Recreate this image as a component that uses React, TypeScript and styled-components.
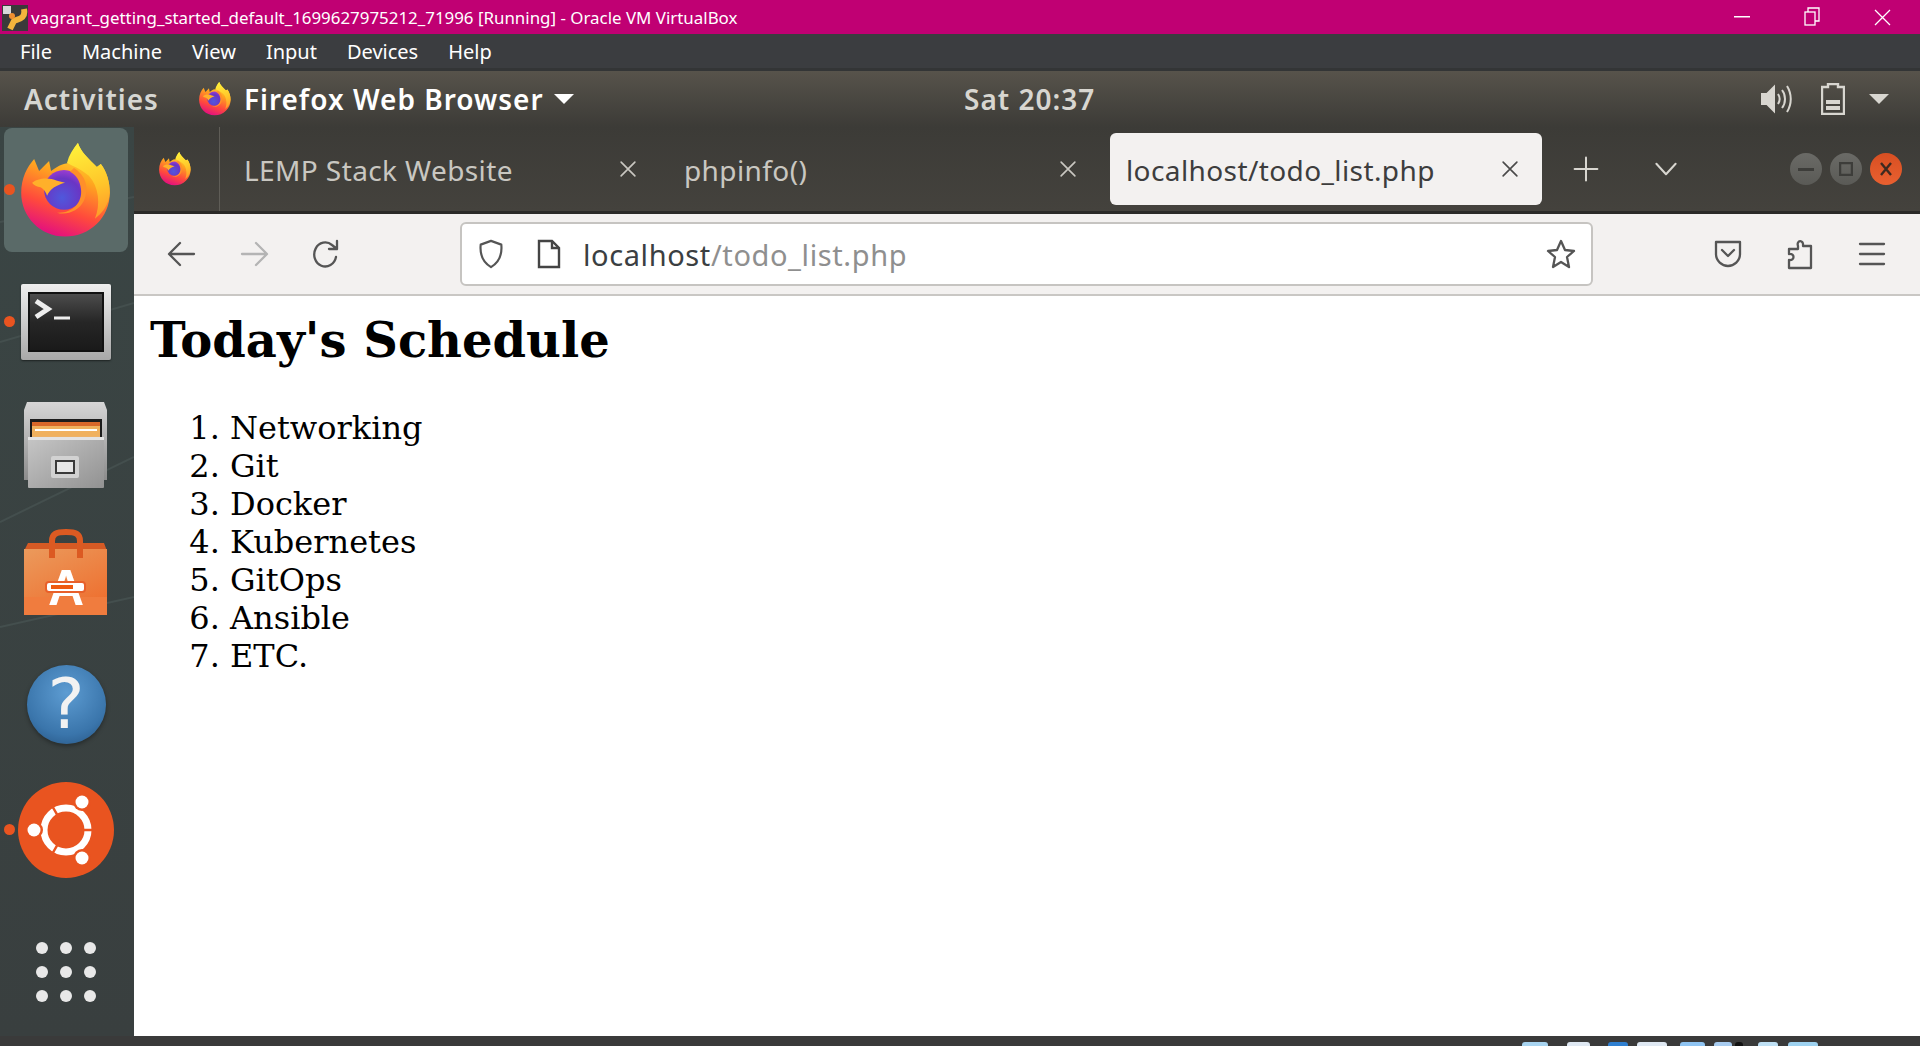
import type { ReactNode } from 'react';
import styled, { createGlobalStyle } from 'styled-components';

const GlobalStyle = createGlobalStyle`
  html, body {
    margin: 0;
    padding: 0;
    background: #3a4544;
  }
  * {
    box-sizing: border-box;
  }
`;

const UI_FONT = `'Noto Sans', 'Open Sans', sans-serif`;

const Screen = styled.div`
  width: 1920px;
  height: 1046px;
  display: flex;
  flex-direction: column;
  overflow: hidden;
`;

const TitleBar = styled.div`
  height: 34px;
  flex: none;
  display: flex;
  align-items: center;
  padding-right: 3px;
  background: #c00073;
  color: #fff;
  font: 16.9px ${UI_FONT};
`;

const TitleIcon = styled.svg`
  width: 26px;
  height: 26px;
  margin: 2px 3px 0 2px;
`;

const TitleText = styled.span`
  flex: 1;
  white-space: nowrap;
`;

const WindowButton = styled.div`
  width: 70px;
  height: 34px;
  display: flex;
  align-items: center;
  justify-content: center;
`;

const MenuBar = styled.div`
  height: 37px;
  flex: none;
  display: flex;
  align-items: center;
  gap: 30px;
  padding-left: 20px;
  background: #3b3d40;
  border-bottom: 3px solid #333536;
  color: #fff;
  font: 20px ${UI_FONT};
`;

const TopBar = styled.div`
  height: 56px;
  flex: none;
  display: flex;
  align-items: center;
  position: relative;
  padding-left: 24px;
  background: linear-gradient(#57534b, #3c3b37);
  color: #fff;
  font: 600 28px ${UI_FONT};
  letter-spacing: 1px;
`;

const Activities = styled.span`
  color: #d6d6d2;
  margin-right: 40px;
`;

const AppName = styled.span`
  margin: 0 10px 0 13px;
`;

const Clock = styled.span`
  position: absolute;
  left: 964px;
  color: #d8d6d0;
`;

const Tray = styled.div`
  margin-left: auto;
  display: flex;
  align-items: center;
  gap: 26px;
  padding-right: 31px;
`;

const BatteryIcon = styled.svg`
  width: 24px;
  height: 32px;
  margin: 0 -2px 0 2px;
`;

const DownArrow = styled.div<{ $color: string }>`
  width: 0;
  height: 0;
  border-left: 10px solid transparent;
  border-right: 10px solid transparent;
  border-top: 10px solid ${({ $color }) => $color};
`;

const Main = styled.div`
  flex: 1;
  min-height: 0;
  display: flex;
`;

const Dock = styled.div`
  width: 134px;
  flex: none;
  position: relative;
  display: flex;
  flex-direction: column;
  align-items: center;
  padding: 1px 2px 0 0;
  background: linear-gradient(#3a4544, #393f3f);
`;

const Wallpaper = styled.svg`
  position: absolute;
  inset: 0;
  width: 100%;
  height: 100%;
`;

const DockItem = styled.div<{ $height: number; $active?: boolean; $top?: number }>`
  width: 124px;
  height: ${({ $height }) => $height}px;
  margin-top: ${({ $top }) => $top ?? 0}px;
  flex: none;
  position: relative;
  display: flex;
  align-items: center;
  justify-content: center;
  border-radius: 8px;
  background: ${({ $active }) => ($active ? '#5a6a68' : 'transparent')};
`;

const RunDot = styled.div`
  position: absolute;
  left: 0;
  top: 50%;
  width: 11px;
  height: 11px;
  margin-top: -6px;
  border-radius: 50%;
  background: #e95420;
`;

const TerminalIcon = styled.div`
  width: 90px;
  height: 76px;
  padding: 8px 7px;
  border-radius: 2px;
  background: linear-gradient(#eeeeee, #a8a8a8);
  box-shadow: 0 1px 2px rgba(0, 0, 0, 0.5);
`;

const TerminalScreen = styled.div`
  height: 100%;
  background: linear-gradient(#4c4c4c, #262626 50%, #1a1a1a);
  border: 2px solid #111;
`;

const HelpIcon = styled.div`
  width: 79px;
  height: 79px;
  display: flex;
  align-items: center;
  justify-content: center;
  border-radius: 50%;
  background: radial-gradient(circle at 50% 35%, #5d9cd2, #3a75ab 65%, #234f7c);
  box-shadow: 0 2px 4px rgba(0, 0, 0, 0.35);
  color: #f2f2f2;
  font: 400 70px 'DejaVu Sans', sans-serif;
`;

const AppsGrid = styled.div`
  display: grid;
  grid-template-columns: repeat(3, 12px);
  gap: 12px;
`;

const AppsDot = styled.div`
  width: 12px;
  height: 12px;
  border-radius: 50%;
  background: #e8e8e8;
`;

const Browser = styled.div`
  flex: 1;
  min-width: 0;
  display: flex;
  flex-direction: column;
  background: #fff;
`;

const TabBar = styled.div`
  height: 87px;
  flex: none;
  display: flex;
  align-items: center;
  background: linear-gradient(#3c3b37, #44423d);
  border-bottom: 3px solid #2b2a28;
  font: 28px ${UI_FONT};
`;

const FirefoxSlot = styled.div`
  width: 86px;
  height: 100%;
  flex: none;
  display: flex;
  align-items: center;
  justify-content: center;
  padding-right: 4px;
  border-right: 1px solid #5f5d57;
`;

const Tab = styled.div<{ $active?: boolean }>`
  width: ${({ $active }) => ($active ? 432 : 440)}px;
  height: 72px;
  margin-left: ${({ $active }) => ($active ? 10 : 0)}px;
  flex: none;
  display: flex;
  align-items: center;
  justify-content: space-between;
  padding: 0 22px 0 ${({ $active }) => ($active ? 16 : 24)}px;
  border-radius: 6px;
  background: ${({ $active }) => ($active ? '#f3f1f0' : 'transparent')};
  color: ${({ $active }) => ($active ? '#3d3d3d' : '#c9c7c1')};
`;

const TabTitle = styled.span`
  padding-top: 2px;
  white-space: nowrap;
  letter-spacing: 0.4px;
`;

const TabTools = styled.div`
  display: flex;
  align-items: center;
  gap: 52px;
  padding-left: 30px;
`;

const WindowControls = styled.div`
  margin-left: auto;
  display: flex;
  gap: 8px;
  padding: 0 18px 0 0;
`;

const ControlDot = styled.div<{ $bg: string }>`
  width: 32px;
  height: 32px;
  display: flex;
  align-items: center;
  justify-content: center;
  border-radius: 50%;
  background: ${({ $bg }) => $bg};
`;

const Toolbar = styled.div`
  height: 82px;
  flex: none;
  display: flex;
  align-items: center;
  padding-left: 12px;
  background: #f3f1f0;
  border-bottom: 2px solid #c9c7c4;
`;

const ToolButton = styled.div`
  width: 72px;
  display: flex;
  justify-content: center;
`;

const UrlBar = styled.div`
  width: 1133px;
  height: 64px;
  margin: 0 99px 0 98px;
  flex: none;
  display: flex;
  align-items: center;
  padding: 0 14px;
  background: #fff;
  border: 2px solid #c6c4c1;
  border-radius: 6px;
  font: 29px ${UI_FONT};
`;

const PageIcon = styled.svg`
  width: 26px;
  height: 30px;
  margin-left: 30px;
`;

const UrlHost = styled.span`
  color: #3b3f42;
  margin-left: 21px;
  letter-spacing: 0.6px;
`;

const UrlPath = styled.span`
  flex: 1;
  color: #8f8f8f;
  letter-spacing: 0.6px;
`;

const Page = styled.div`
  flex: 1;
  padding: 1px 16px;
  font-family: 'DejaVu Serif', serif;
  color: #000;
`;

const Heading = styled.h1`
  margin: 16px 0 42px;
  font-size: 48px;
  line-height: 54px;
  font-weight: 700;
`;

const ScheduleList = styled.ol`
  margin: 0;
  padding-left: 80px;
  font-size: 32px;
  line-height: 38px;
`;

const TaskStrip = styled.div`
  height: 10px;
  flex: none;
  display: flex;
  align-items: flex-end;
  padding-left: 1522px;
  background: #3a3a3a;
`;

const TaskChip = styled.div<{ $width: number; $gap: number; $color: string }>`
  width: ${({ $width }) => $width}px;
  height: 4px;
  margin-right: ${({ $gap }) => $gap}px;
  border-radius: 3px 3px 0 0;
  background: ${({ $color }) => $color};
`;

const FirefoxLogo = ({ size, uid }: { size: number; uid: string }) => (
  <svg width={size} height={size * 1.04} viewBox="0 0 90 94">
    <defs>
      <linearGradient id={`${uid}-body`} x1="0.75" y1="0" x2="0.4" y2="1">
        <stop offset="0" stopColor="#fff23d" />
        <stop offset="0.38" stopColor="#ffa51f" />
        <stop offset="0.72" stopColor="#ff4a3c" />
        <stop offset="1" stopColor="#e3107f" />
      </linearGradient>
      <linearGradient id={`${uid}-flame`} x1="0.4" y1="0" x2="0.6" y2="1">
        <stop offset="0" stopColor="#fff03a" />
        <stop offset="0.6" stopColor="#ffc52a" />
        <stop offset="1" stopColor="#ff9a2a" />
      </linearGradient>
      <radialGradient id={`${uid}-globe`} cx="0.45" cy="0.7" r="0.75">
        <stop offset="0" stopColor="#4f58dc" />
        <stop offset="0.65" stopColor="#6a35c4" />
        <stop offset="1" stopColor="#a83fd4" />
      </radialGradient>
    </defs>
    <path
      d="M57 0C60 9 67 15 76 24L80 21C86 29 89 39 89 50C89 75 69 94 44 94C19 94 0 74 0 50C0 35 6 24 13 16L18 28L28 18L30 28C38 22 44 20 49 20C49 13 52 6 57 0Z"
      fill={`url(#${uid}-body)`}
    />
    <path
      d="M57 0C60 9 67 15 76 24L80 21C86 29 89 39 89 50C88 62 82 70 74 76C80 62 78 44 68 33C60 26 50 22 46 20C48 12 52 6 57 0Z"
      fill={`url(#${uid}-flame)`}
    />
    <circle cx="43" cy="47" r="20" fill={`url(#${uid}-globe)`} />
    <path
      d="M53 25C64 32 69 44 63 58C58 68 46 73 36 70C51 71 62 60 60 46C59 38 55 32 49 29Z"
      fill="#ff8f2a"
    />
    <path
      d="M11 40C16 35 28 34 36 38L44 40C36 42 29 46 26 53C24 47 20 44 17 44C14 43 12 42 11 40Z"
      fill="#ffb02a"
    />
  </svg>
);

const FilesIcon = () => (
  <svg width="86" height="88" viewBox="0 0 86 88">
    <defs>
      <linearGradient id="cab-top" x1="0" y1="0" x2="0" y2="1">
        <stop offset="0" stopColor="#d6d6d6" />
        <stop offset="1" stopColor="#8c8c8c" />
      </linearGradient>
      <linearGradient id="cab-front" x1="0" y1="0" x2="1" y2="1">
        <stop offset="0" stopColor="#c6c6c6" />
        <stop offset="1" stopColor="#929292" />
      </linearGradient>
    </defs>
    <path d="M4 0H81L84 8V78H1V8Z" fill="url(#cab-top)" />
    <rect x="7" y="17" width="72" height="25" fill="#1c1c1c" />
    <rect x="9" y="20" width="68" height="22" fill="#d9682a" />
    <rect x="9" y="24" width="68" height="10" fill="#f0b15e" />
    <rect x="12" y="27" width="62" height="2" fill="#fff" />
    <rect x="9" y="34" width="68" height="8" fill="#edb268" />
    <rect x="5" y="35" width="76" height="51" rx="1" fill="url(#cab-front)" />
    <rect x="5" y="35" width="76" height="3" fill="#e4e4e4" />
    <rect x="28" y="54" width="28" height="22" rx="2" fill="#d2d2d2" />
    <rect x="32" y="58" width="20" height="14" fill="#3a3a3a" />
    <rect x="34" y="60" width="16" height="10" fill="#e6e6e6" />
  </svg>
);

const StoreIcon = () => (
  <svg width="86" height="88" viewBox="0 0 86 88">
    <defs>
      <linearGradient id="bag" x1="0" y1="0" x2="0.6" y2="1">
        <stop offset="0" stopColor="#eb9a5c" />
        <stop offset="1" stopColor="#ee7030" />
      </linearGradient>
    </defs>
    <path d="M5 14H81L84 22V86H1V22Z" fill="#d65a24" />
    <rect x="1" y="20" width="83" height="66" fill="url(#bag)" />
    <rect x="1" y="68" width="83" height="18" fill="#f07c3e" />
    <path d="M29 29V12C29 5 33 3 43 3C53 3 57 5 57 12V29" fill="none" stroke="#dc5a22" strokeWidth="6" />
    <text x="43" y="76" textAnchor="middle" fontFamily="'Liberation Sans', sans-serif" fontWeight="700" fontSize="50" fill="#fff">A</text>
    <rect x="23" y="53" width="39" height="10" rx="3" fill="#fff" stroke="#e8602a" strokeWidth="2" />
    <rect x="28" y="56" width="22" height="4" fill="#ee5a10" />
  </svg>
);

const UbuntuIcon = () => (
  <svg width="96" height="96" viewBox="0 0 96 96">
    <circle cx="48" cy="48" r="48" fill="#e95420" />
    <circle cx="48" cy="48" r="22" fill="none" stroke="#fff" strokeWidth="7" />
    <path d="M60 48H78M42 37.6L33 22M42 58.4L33 74" stroke="#e95420" strokeWidth="2.5" />
    <circle cx="16" cy="48" r="9" fill="#e95420" />
    <circle cx="64" cy="20" r="9" fill="#e95420" />
    <circle cx="64" cy="76" r="9" fill="#e95420" />
    <circle cx="16" cy="48" r="6.5" fill="#fff" />
    <circle cx="64" cy="20" r="6.5" fill="#fff" />
    <circle cx="64" cy="76" r="6.5" fill="#fff" />
  </svg>
);

const Stroke = ({ size, color, width = 2.3, d, children }: { size: number; color: string; width?: number; d?: string; children?: ReactNode }) => (
  <svg width={size} height={size} viewBox="0 0 32 32" fill="none" stroke={color} strokeWidth={width} strokeLinecap="round" strokeLinejoin="round">
    {d && <path d={d} />}
    {children}
  </svg>
);

const CloseMark = ({ color }: { color: string }) => <Stroke size={20} color={color} width={2.6} d="M5 5L27 27M27 5L5 27" />;

const tasks = [
  { width: 26, gap: 19, color: '#a8d4f0' },
  { width: 23, gap: 18, color: '#dfe8f2' },
  { width: 20, gap: 9, color: '#2f7fd0' },
  { width: 30, gap: 13, color: '#dfe8f2' },
  { width: 25, gap: 9, color: '#8fc4f2' },
  { width: 18, gap: 3, color: '#a8ccf0' },
  { width: 8, gap: 15, color: '#111' },
  { width: 20, gap: 10, color: '#bfe0f4' },
  { width: 30, gap: 0, color: '#9ed2f0' },
];

const schedule = ['Networking', 'Git', 'Docker', 'Kubernetes', 'GitOps', 'Ansible', 'ETC.'];

export default function App() {
  return (
    <Screen>
      <GlobalStyle />
      <TitleBar>
        <TitleIcon viewBox="0 0 26 26">
          <rect width="26" height="26" fill="#3a3a3a" />
          <rect x="1" y="1" width="8" height="8" fill="#d8d8d8" />
          <path d="M22 4C24 14 16 14 12 16L8 24" fill="none" stroke="#f4b43c" strokeWidth="6" />
          <circle cx="10" cy="11" r="3" fill="#f09030" />
        </TitleIcon>
        <TitleText>vagrant_getting_started_default_1699627975212_71996 [Running] - Oracle VM VirtualBox</TitleText>
        <WindowButton>
          <svg width="16" height="2"><rect width="16" height="1.5" fill="#fff" /></svg>
        </WindowButton>
        <WindowButton>
          <svg width="16" height="20" viewBox="0 0 16 20" fill="none" stroke="#fff" strokeWidth="1.3">
            <rect x="1" y="5" width="10" height="13" />
            <path d="M4 5V1H15V14H11" />
          </svg>
        </WindowButton>
        <WindowButton>
          <svg width="17" height="17" viewBox="0 0 17 17" stroke="#fff" strokeWidth="1.3"><path d="M1 1L16 16M16 1L1 16" /></svg>
        </WindowButton>
      </TitleBar>

      <MenuBar>
        <span>File</span>
        <span>Machine</span>
        <span>View</span>
        <span>Input</span>
        <span>Devices</span>
        <span>Help</span>
      </MenuBar>

      <TopBar>
        <Activities>Activities</Activities>
        <FirefoxLogo size={32} uid="ff-top" />
        <AppName>Firefox Web Browser</AppName>
        <DownArrow $color="#ffffff" />
        <Clock>Sat 20:37</Clock>
        <Tray>
          <svg width="32" height="30" viewBox="0 0 32 30" fill="none" stroke="#d8d6d0" strokeWidth="2">
            <path d="M1 10H6L13 3V27L6 20H1Z" fill="#d8d6d0" />
            <path d="M17 10C19 13 19 17 17 20M21 6C25 11 25 19 21 24M26 2C31 10 31 20 26 28" />
          </svg>
          <BatteryIcon viewBox="0 0 24 32">
            <path d="M7 1H17V4H23V31H1V4H7Z" fill="none" stroke="#d8d6d0" strokeWidth="2.4" />
            <rect x="5" y="17" width="14" height="4" fill="#d8d6d0" />
            <rect x="5" y="23" width="14" height="4" fill="#d8d6d0" />
          </BatteryIcon>
          <DownArrow $color="#d8d6d0" />
        </Tray>
      </TopBar>

      <Main>
        <Dock>
          <Wallpaper viewBox="0 0 134 909" preserveAspectRatio="none">
            <path d="M0 95L134 70M0 215L134 176M0 395L134 330M0 500L134 470" stroke="#444f4e" strokeWidth="2" fill="none" />
          </Wallpaper>
          <DockItem $height={124} $active>
            <RunDot />
            <FirefoxLogo size={90} uid="ff-dock" />
          </DockItem>
          <DockItem $height={140}>
            <RunDot />
            <TerminalIcon>
              <TerminalScreen>
                <svg width="72" height="48" viewBox="0 0 72 48" fill="none" stroke="#eeeeee">
                  <path d="M6 7L18 15L6 23" strokeWidth="5" />
                  <path d="M24 24H40" strokeWidth="3" />
                </svg>
              </TerminalScreen>
            </TerminalIcon>
          </DockItem>
          <DockItem $height={108}>
            <FilesIcon />
          </DockItem>
          <DockItem $height={146}>
            <StoreIcon />
          </DockItem>
          <DockItem $height={116}>
            <HelpIcon>?</HelpIcon>
          </DockItem>
          <DockItem $height={136}>
            <RunDot />
            <UbuntuIcon />
          </DockItem>
          <DockItem $height={128} $top={10}>
            <AppsGrid>
              {Array.from({ length: 9 }, (_, i) => (
                <AppsDot key={i} />
              ))}
            </AppsGrid>
          </DockItem>
        </Dock>

        <Browser>
          <TabBar>
            <FirefoxSlot>
              <FirefoxLogo size={32} uid="ff-tab" />
            </FirefoxSlot>
            <Tab>
              <TabTitle>LEMP Stack Website</TabTitle>
              <CloseMark color="#c9c7c1" />
            </Tab>
            <Tab>
              <TabTitle>phpinfo()</TabTitle>
              <CloseMark color="#c9c7c1" />
            </Tab>
            <Tab $active>
              <TabTitle>localhost/todo_list.php</TabTitle>
              <CloseMark color="#4a4a4a" />
            </Tab>
            <TabTools>
              <Stroke size={28} color="#d8d6d0" d="M16 3V29M3 16H29" />
              <Stroke size={28} color="#d8d6d0" d="M5 10L16 22L27 10" />
            </TabTools>
            <WindowControls>
              <ControlDot $bg="linear-gradient(#6a6a66, #5a5a56)">
                <svg width="16" height="3"><rect width="16" height="3" fill="#3d3d3a" /></svg>
              </ControlDot>
              <ControlDot $bg="linear-gradient(#6a6a66, #5a5a56)">
                <svg width="14" height="14" fill="none" stroke="#3d3d3a" strokeWidth="2.5"><rect x="1" y="1" width="12" height="12" /></svg>
              </ControlDot>
              <ControlDot $bg="linear-gradient(#d84f22, #e96030)">
                <svg width="14" height="14" stroke="#3d2a20" strokeWidth="2.4"><path d="M2 1L12 13M12 1L2 13" /></svg>
              </ControlDot>
            </WindowControls>
          </TabBar>

          <Toolbar>
            <ToolButton>
              <Stroke size={32} color="#555" d="M28 16H4M14 5L3 16L14 27" />
            </ToolButton>
            <ToolButton>
              <Stroke size={32} color="#b4b4b4" d="M4 16H28M18 5L29 16L18 27" />
            </ToolButton>
            <ToolButton>
              <Stroke size={32} color="#555" d="M26 19A11 12 0 1 1 22 7L27 11M27 3V11H19" />
            </ToolButton>
            <UrlBar>
              <Stroke size={30} color="#555" d="M16 2L27 6C28 16 26 24 16 30C6 24 4 16 5 6Z" />
              <PageIcon viewBox="0 0 26 30" fill="none" stroke="#444" strokeWidth="2.4">
                <path d="M3 2H16L23 9V28H3Z" />
                <path d="M16 2V9H23" />
              </PageIcon>
              <UrlHost>localhost</UrlHost>
              <UrlPath>/todo_list.php</UrlPath>
              <Stroke size={32} color="#555" d="M16 3L20 12L29 13L22 19L24 29L16 24L8 29L10 19L3 13L12 12Z" />
            </UrlBar>
            <ToolButton>
              <Stroke size={32} color="#555" d="M4 4H28V16C28 23 22 28 16 28C10 28 4 23 4 16ZM10 12L16 18L22 12" />
            </ToolButton>
            <ToolButton>
              <Stroke size={32} color="#555" d="M14 8C12 2 20 1 19 8H27V30H5V22C11 23 11 15 5 16V11H14Z" />
            </ToolButton>
            <ToolButton>
              <Stroke size={32} color="#555" d="M4 6H28M4 16H28M4 26H28" />
            </ToolButton>
          </Toolbar>

          <Page>
            <Heading>Today's Schedule</Heading>
            <ScheduleList>
              {schedule.map(item => (
                <li key={item}>{item}</li>
              ))}
            </ScheduleList>
          </Page>
        </Browser>
      </Main>

      <TaskStrip>
        {tasks.map((t, i) => (
          <TaskChip key={i} $width={t.width} $gap={t.gap} $color={t.color} />
        ))}
      </TaskStrip>
    </Screen>
  );
}
